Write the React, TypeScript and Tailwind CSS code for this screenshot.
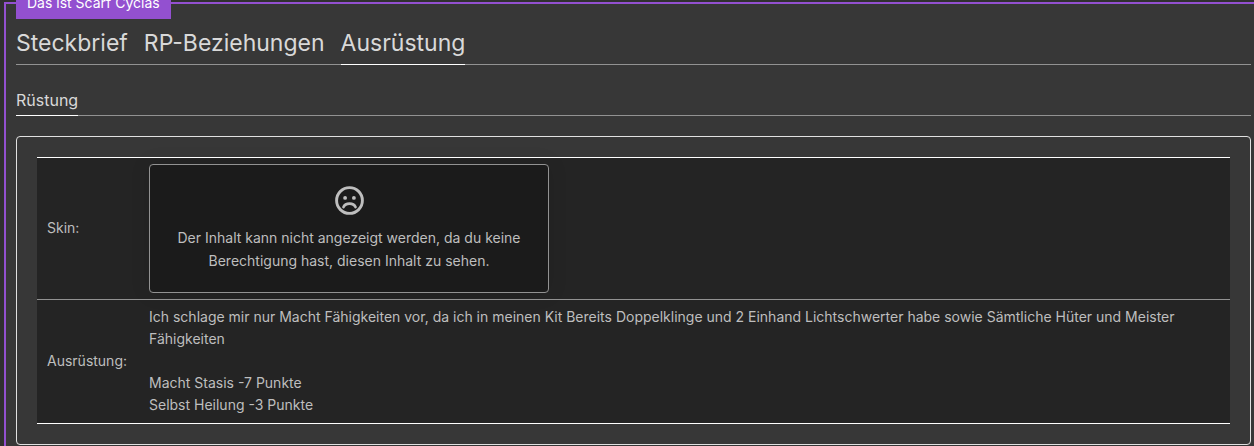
import { ReactNode } from "react"

const tabs = ["Steckbrief", "RP-Beziehungen", "Ausrüstung"]

function SadFace() {
  return (
    <svg viewBox="0 0 30 30" className="h-[30px] w-[30px]" fill="none" stroke="currentColor" aria-hidden="true">
      <circle cx="15.5" cy="14.5" r="12.9" strokeWidth="2.9" />
      <circle cx="11.1" cy="11.9" r="1.9" fill="currentColor" stroke="none" />
      <circle cx="19.9" cy="11.9" r="1.9" fill="currentColor" stroke="none" />
      <path d="M9.5 21C11.5 16.6 19.5 16.6 21.5 21" strokeWidth="2.7" strokeLinecap="round" />
    </svg>
  )
}

function Row({ label, children }: { label: string; children: ReactNode }) {
  return (
    <tr className="h-[124px] border-b border-[#929292] last:border-white">
      <th scope="row" className="w-[102px] pt-1 pb-[6px] pl-[10px] text-left align-middle font-normal whitespace-nowrap">
        {label}
      </th>
      <td className="px-[10px] py-[6px] align-top">{children}</td>
    </tr>
  )
}

export default function App() {
  return (
    <div className="overflow-hidden bg-[#303030] pt-[2px] pl-1 font-['Inter',sans-serif] text-[14px] leading-[22px] text-[#bebebe]">
      <section className="relative border-t-2 border-l-2 border-[#9350d0] bg-[#373737] pr-[3px] pb-px pl-[10px]">
        {/* Title badge on the frame */}
        <h1 className="absolute -top-4 left-[10px] bg-[#9350d0] px-[11px] pt-1 pb-[5px] text-white">
          Das ist Scarf Cyclas
        </h1>

        {/* Main tabs */}
        <nav className="flex gap-4 border-b border-[#929292] pt-[23px] text-[23px] leading-8 text-[#d9d9d9]">
          {tabs.map((tab) => (
            <a
              key={tab}
              href="#"
              aria-current={tab === "Ausrüstung" ? "page" : undefined}
              className="-mb-px border-b border-transparent pb-[5px] aria-[current=page]:border-white"
            >
              {tab}
            </a>
          ))}
        </nav>

        {/* Sub tabs */}
        <nav className="flex border-b border-[#929292] pt-[23px] text-base text-[#d9d9d9]">
          <a href="#" aria-current="page" className="-mb-px border-b border-white pb-[3px]">
            Rüstung
          </a>
        </nav>

        <div className="mt-5 rounded border border-[#e0e0e0] p-5">
          <table className="w-full table-fixed border-collapse border-t border-white bg-[#242424]">
            <tbody>
              <Row label="Skin:">
                <div className="flex h-[129px] w-[400px] flex-col items-center rounded border border-[#929292] bg-[#1b1b1b] px-5 pt-[21px] text-center leading-[23px] shadow-[0_0_20px_rgba(0,0,0,0.1)]">
                  <SadFace />
                  <p className="mt-[10px]">
                    Der Inhalt kann nicht angezeigt werden, da du keine Berechtigung hast, diesen Inhalt zu sehen.
                  </p>
                </div>
              </Row>
              <Row label="Ausrüstung:">
                <p>
                  Ich schlage mir nur Macht Fähigkeiten vor, da ich in meinen Kit Bereits Doppelklinge und 2 Einhand
                  Lichtschwerter habe sowie Sämtliche Hüter und Meister Fähigkeiten
                </p>
                <p className="mt-[22px]">Macht Stasis -7 Punkte</p>
                <p>Selbst Heilung -3 Punkte</p>
              </Row>
            </tbody>
          </table>
        </div>
      </section>
    </div>
  )
}
